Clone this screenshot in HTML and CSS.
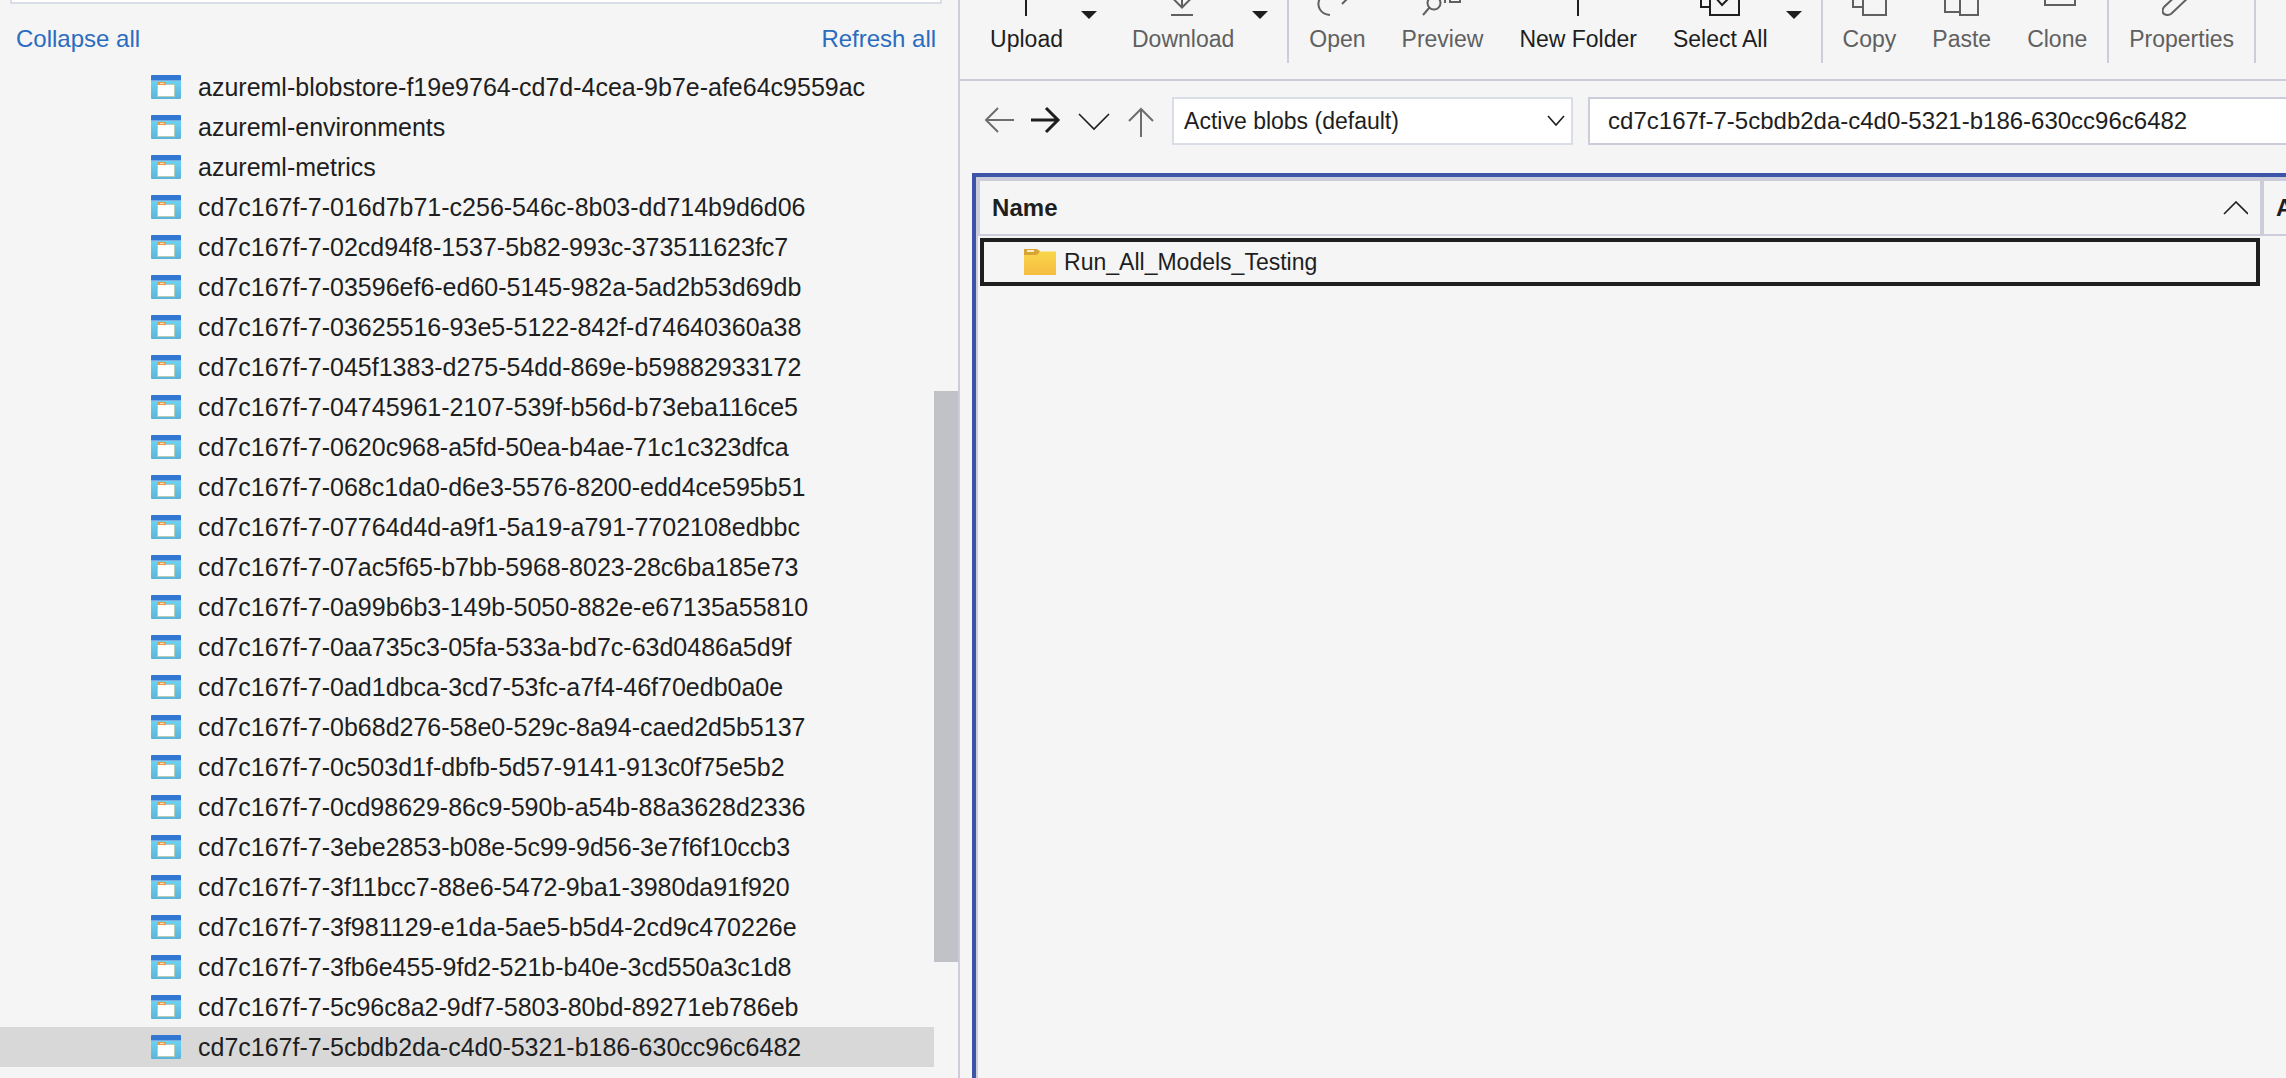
FILE: index.html
```
<!DOCTYPE html>
<html lang="en">
<head>
  <meta charset="UTF-8">
  <meta name="viewport" content="width=device-width, initial-scale=1.0">
  <title>Storage Explorer</title>
  <link rel="stylesheet" href="styles.css">
</head>
<body>
  <!-- Shared icons -->
  <svg class="sprite" aria-hidden="true">
    <defs>
      <linearGradient id="containerFill" x1="0" y1="0" x2="0" y2="1">
        <stop offset="0" stop-color="#6ed6f4"/>
        <stop offset="1" stop-color="#5cb4d8"/>
      </linearGradient>
      <linearGradient id="folderFill" x1="0" y1="0" x2="0" y2="1">
        <stop offset="0" stop-color="#f9d84a"/>
        <stop offset="1" stop-color="#f5bd41"/>
      </linearGradient>
    </defs>
    <symbol id="container" viewBox="0 0 30 24">
      <rect y="4" width="30" height="20" rx="1" fill="url(#containerFill)"/>
      <path d="M1 0h28a1 1 0 0 1 1 1v4H0V1a1 1 0 0 1 1-1z" fill="#3277d1"/>
      <rect y="5" width="30" height="1" fill="#7da9dc"/>
      <path d="M6 8h9v1h8.500q.5 0 .5.500V22H6.500q-.5 0-.5-.5z" fill="#b5cdb9"/>
      <path d="M7 10h16v11H7z" fill="#fff"/>
      <path d="M7 7h7q1 0 1 1v1l-1 1H7q-1 0-1-1V8q0-1 1-1z" fill="#ea9a48"/>
      <rect x="9" y="8" width="4" height="1" fill="#fbe3c8"/>
    </symbol>
    <symbol id="caret" viewBox="0 0 16 8">
      <path d="M0 0h16L8 8z" fill="currentColor"/>
    </symbol>
  </svg>

  <div class="app">
    <!-- Sidebar -->
    <aside class="sidebar">
      <div class="search-edge"></div>
      <div class="tree-actions">
        <a href="#">Collapse all</a>
        <a href="#">Refresh all</a>
      </div>
      <div class="tree-wrap">
        <ul class="tree">
          <li class="node"><svg class="node-icon"><use href="#container"/></svg>azureml-blobstore-f19e9764-cd7d-4cea-9b7e-afe64c9559ac</li>
          <li class="node"><svg class="node-icon"><use href="#container"/></svg>azureml-environments</li>
          <li class="node"><svg class="node-icon"><use href="#container"/></svg>azureml-metrics</li>
          <li class="node"><svg class="node-icon"><use href="#container"/></svg>cd7c167f-7-016d7b71-c256-546c-8b03-dd714b9d6d06</li>
          <li class="node"><svg class="node-icon"><use href="#container"/></svg>cd7c167f-7-02cd94f8-1537-5b82-993c-373511623fc7</li>
          <li class="node"><svg class="node-icon"><use href="#container"/></svg>cd7c167f-7-03596ef6-ed60-5145-982a-5ad2b53d69db</li>
          <li class="node"><svg class="node-icon"><use href="#container"/></svg>cd7c167f-7-03625516-93e5-5122-842f-d74640360a38</li>
          <li class="node"><svg class="node-icon"><use href="#container"/></svg>cd7c167f-7-045f1383-d275-54dd-869e-b59882933172</li>
          <li class="node"><svg class="node-icon"><use href="#container"/></svg>cd7c167f-7-04745961-2107-539f-b56d-b73eba116ce5</li>
          <li class="node"><svg class="node-icon"><use href="#container"/></svg>cd7c167f-7-0620c968-a5fd-50ea-b4ae-71c1c323dfca</li>
          <li class="node"><svg class="node-icon"><use href="#container"/></svg>cd7c167f-7-068c1da0-d6e3-5576-8200-edd4ce595b51</li>
          <li class="node"><svg class="node-icon"><use href="#container"/></svg>cd7c167f-7-07764d4d-a9f1-5a19-a791-7702108edbbc</li>
          <li class="node"><svg class="node-icon"><use href="#container"/></svg>cd7c167f-7-07ac5f65-b7bb-5968-8023-28c6ba185e73</li>
          <li class="node"><svg class="node-icon"><use href="#container"/></svg>cd7c167f-7-0a99b6b3-149b-5050-882e-e67135a55810</li>
          <li class="node"><svg class="node-icon"><use href="#container"/></svg>cd7c167f-7-0aa735c3-05fa-533a-bd7c-63d0486a5d9f</li>
          <li class="node"><svg class="node-icon"><use href="#container"/></svg>cd7c167f-7-0ad1dbca-3cd7-53fc-a7f4-46f70edb0a0e</li>
          <li class="node"><svg class="node-icon"><use href="#container"/></svg>cd7c167f-7-0b68d276-58e0-529c-8a94-caed2d5b5137</li>
          <li class="node"><svg class="node-icon"><use href="#container"/></svg>cd7c167f-7-0c503d1f-dbfb-5d57-9141-913c0f75e5b2</li>
          <li class="node"><svg class="node-icon"><use href="#container"/></svg>cd7c167f-7-0cd98629-86c9-590b-a54b-88a3628d2336</li>
          <li class="node"><svg class="node-icon"><use href="#container"/></svg>cd7c167f-7-3ebe2853-b08e-5c99-9d56-3e7f6f10ccb3</li>
          <li class="node"><svg class="node-icon"><use href="#container"/></svg>cd7c167f-7-3f11bcc7-88e6-5472-9ba1-3980da91f920</li>
          <li class="node"><svg class="node-icon"><use href="#container"/></svg>cd7c167f-7-3f981129-e1da-5ae5-b5d4-2cd9c470226e</li>
          <li class="node"><svg class="node-icon"><use href="#container"/></svg>cd7c167f-7-3fb6e455-9fd2-521b-b40e-3cd550a3c1d8</li>
          <li class="node"><svg class="node-icon"><use href="#container"/></svg>cd7c167f-7-5c96c8a2-9df7-5803-80bd-89271eb786eb</li>
          <li class="node selected"><svg class="node-icon"><use href="#container"/></svg>cd7c167f-7-5cbdb2da-c4d0-5321-b186-630cc96c6482</li>
        </ul>
        <div class="scrollbar"><div class="thumb"></div></div>
      </div>
    </aside>
    <!-- End Sidebar -->

    <main class="editor">
      <!-- Toolbar -->
      <div class="toolbar">
        <div class="group">
          <button class="tool" type="button">
            <svg class="tool-icon" viewBox="0 0 40 16"><path d="M19 0v16"/></svg>
            Upload
          </button>
          <button class="more" type="button" aria-label="Upload options"><svg class="caret"><use href="#caret"/></svg></button>
          <button class="tool" type="button" disabled>
            <svg class="tool-icon" viewBox="0 0 40 16"><path d="M19 0v7M9.500-2L19 7.500 28.500-2M8 15h22"/></svg>
            Download
          </button>
          <button class="more" type="button" aria-label="Download options"><svg class="caret"><use href="#caret"/></svg></button>
        </div>
        <div class="group">
          <button class="tool" type="button" disabled>
            <svg class="tool-icon" viewBox="0 0 40 16"><path d="M3-2C-1 6 3 14 13 15M25 4l8-8"/></svg>
            Open
          </button>
          <button class="tool" type="button" disabled>
            <svg class="tool-icon" viewBox="0 0 40 16"><circle cx="12" cy="3" r="6.500"/><path d="M7.500 7.500L1 15M23 3V-1M28-1v3h10v-3"/></svg>
            Preview
          </button>
          <button class="tool" type="button">
            <svg class="tool-icon" viewBox="0 0 40 16"><path d="M20 0v16"/></svg>
            New Folder
          </button>
          <button class="tool" type="button">
            <svg class="tool-icon" viewBox="0 0 40 16"><path d="M1-2V7h8M10-2V15h29V-2M15-3l7 8 8-8"/></svg>
            Select All
          </button>
          <button class="more" type="button" aria-label="Selection options"><svg class="caret"><use href="#caret"/></svg></button>
        </div>
        <div class="group">
          <button class="tool" type="button" disabled>
            <svg class="tool-icon" viewBox="0 0 40 16"><path d="M4-2V7h9M14-2V15h23V-2"/></svg>
            Copy
          </button>
          <button class="tool" type="button" disabled>
            <svg class="tool-icon" viewBox="0 0 40 16"><path d="M3-2V12h14M18-2V15h18V-2"/></svg>
            Paste
          </button>
          <button class="tool" type="button" disabled>
            <svg class="tool-icon" viewBox="0 0 40 16"><path d="M8-2V5h30V-2"/></svg>
            Clone
          </button>
        </div>
        <div class="group">
          <button class="tool" type="button" disabled>
            <svg class="tool-icon" viewBox="0 0 40 16"><path d="M18-8L2 7q-3 4 0 7 4 2 7 0L30-6"/></svg>
            Properties
          </button>
        </div>
      </div>
      <!-- End Toolbar -->

      <!-- Navigation -->
      <div class="navbar">
        <button class="nav-btn" type="button" aria-label="Back" disabled><svg viewBox="0 0 32 32"><path d="M30 15H2M14 3L2 15l12 12"/></svg></button>
        <button class="nav-btn" type="button" aria-label="Forward"><svg viewBox="0 0 32 32"><path class="bold" d="M0 15h28M15 3l12 12-12 12"/></svg></button>
        <button class="nav-btn" type="button" aria-label="History"><svg viewBox="0 0 32 32"><path class="thin" d="M1 9l15 15L31 9"/></svg></button>
        <button class="nav-btn" type="button" aria-label="Up" disabled><svg viewBox="0 0 32 32"><path d="M16 32V4M4 16L16 4l12 12"/></svg></button>
        <div class="select-wrap">
          <select class="filter" aria-label="Blob filter">
            <option>Active blobs (default)</option>
          </select>
          <svg class="select-arrow" viewBox="0 0 18 12"><path class="thin" d="M1 1l8 9 8-9"/></svg>
        </div>
        <input class="path" type="text" aria-label="Path" value="cd7c167f-7-5cbdb2da-c4d0-5321-b186-630cc96c6482">
      </div>
      <!-- End Navigation -->

      <div class="grid">
        <table>
          <colgroup><col class="col-name"><col class="col-tier"></colgroup>
          <thead>
            <tr>
              <th class="first"><div class="head">Name <svg class="sort" viewBox="0 0 26 14"><path class="thin" d="M2 13L14 1l12 12"/></svg></div></th>
              <th><div class="head">A</div></th>
            </tr>
          </thead>
          <tbody>
            <tr>
              <td>
                <div class="entry">
                  <svg class="folder" viewBox="0 0 32 26">
                    <path d="M0 0h12l4 2.500h16V26H0z" fill="url(#folderFill)"/>
                    <path d="M0 0h13l3 2.500L13 6H0z" fill="#d9a437"/>
                    <rect x="3" y="1" width="7" height="2" fill="#f9ecc5"/>
                  </svg>
                  Run_All_Models_Testing
                </div>
              </td>
              <td></td>
            </tr>
          </tbody>
        </table>
      </div>
    </main>
  </div>
</body>
</html>
```
FILE: styles.css
```
* {
  box-sizing: border-box;
}
body {
  margin: 0;
  font-family: "Helvetica Neue", "Liberation Sans", Arial, sans-serif;
  font-size: 24px;
  line-height: 28px;
  background-color: #f5f5f5;
  color: #1e1e1e;
  overflow: hidden;
}
button, input, select {
  font: inherit;
  color: inherit;
}
svg {
  display: block;
  flex: none;
  fill: none;
  stroke: none;
}
.sprite {
  position: absolute;
  width: 0;
  height: 0;
}
.app {
  display: flex;
  height: 100vh;
}

/* Sidebar */
.sidebar {
  display: flex;
  flex-direction: column;
  width: 42%;
  flex: none;
  border-right: 2px solid #cccddb;
}
.search-edge {
  height: 4px;
  margin: 0 16px 0 10px;
  background-color: #fff;
  border: 2px solid #d9dde5;
  border-top: none;
}
.tree-actions {
  display: flex;
  justify-content: space-between;
  height: 63px;
  padding: 21px 22px 0 16px;
}
.tree-actions a {
  color: #2b6cbf;
  text-decoration: none;
}
.tree-wrap {
  display: flex;
  flex: 1;
  min-height: 0;
}
.tree {
  flex: 1;
  margin: 0;
  padding: 0;
  list-style: none;
}
.node {
  display: flex;
  align-items: center;
  height: 40px;
  padding-left: 151px;
  font-size: 25px;
  line-height: 26px;
  white-space: nowrap;
}
.node.selected {
  background-color: #d8d8d8;
}
.node-icon {
  width: 30px;
  height: 24px;
  margin-right: 17px;
}
.scrollbar {
  display: flex;
  flex-direction: column;
  width: 24px;
}
.scrollbar::before {
  content: "";
  flex: 64;
}
.scrollbar::after {
  content: "";
  flex: 23;
}
.thumb {
  flex: 113;
  background-color: #c1c2c8;
}

/* Toolbar */
.editor {
  flex: 1;
  min-width: 0;
  overflow: hidden;
}
.toolbar {
  display: flex;
  height: 81px;
  padding-left: 10px;
  font-size: 23px;
  border-bottom: 2px solid #cccddb;
}
.group {
  display: flex;
  height: 63px;
  padding: 0 2px;
  border-right: 2px solid #cccddb;
}
.tool {
  display: flex;
  flex-direction: column;
  align-items: center;
  gap: 9px;
  padding: 0 18px;
  background: none;
  border: none;
  white-space: nowrap;
}
.tool:disabled {
  color: #606060;
}
.tool-icon {
  width: 40px;
  height: 16px;
  stroke: currentColor;
  stroke-width: 2;
}
.more {
  display: flex;
  padding: 11px 17px 0 0;
  background: none;
  border: none;
}
.caret {
  width: 16px;
  height: 8px;
  color: #1e1e1e;
}

/* Navigation */
.navbar {
  display: flex;
  align-items: center;
  height: 92px;
  padding: 0 0 12px 24px;
}
.nav-btn {
  flex: none;
  width: 32px;
  height: 32px;
  margin-right: 15px;
  padding: 0;
  background: none;
  border: none;
}
.nav-btn:disabled {
  color: #6e6e6e;
}
.nav-btn svg, .select-arrow, .sort {
  stroke: currentColor;
  stroke-width: 2;
}
.nav-btn .bold {
  stroke-width: 3;
}
.thin {
  stroke-width: 1.6;
}
.select-wrap {
  position: relative;
  flex: none;
  width: 401px;
  margin-right: 15px;
}
.filter {
  display: block;
  width: 100%;
  height: 48px;
  padding: 0 40px 0 10px;
  font-size: 23px;
  appearance: none;
  background-color: #fff;
  border: 2px solid #d9dde5;
  border-radius: 0;
}
.select-arrow {
  position: absolute;
  top: 18px;
  right: 8px;
  width: 18px;
  height: 12px;
  pointer-events: none;
}
.path {
  flex: 1;
  min-width: 0;
  height: 48px;
  margin-right: -20px;
  padding: 0 18px;
  background-color: #fff;
  border: 2px solid #cccddb;
}

/* Blob list */
.grid {
  height: 100%;
  margin-left: 12px;
  border-top: 4px solid #3c55a8;
  border-left: 4px solid #3c55a8;
  overflow: hidden;
}
table {
  width: 1500px;
  height: 100%;
  table-layout: fixed;
  border-spacing: 0;
  border-left: 2px solid #cccddb;
}
.col-name {
  width: 1286px;
}
th {
  height: 59px;
  padding: 0 12px;
  text-align: left;
  border-top: 4px solid #cccddb;
  border-right: 4px solid #cccddb;
  border-bottom: 2px solid #cccddb;
}
th.first {
  border-left: 2px solid #cccddb;
}
.head {
  display: flex;
  align-items: center;
  justify-content: space-between;
}
.sort {
  width: 26px;
  height: 14px;
}
td {
  padding: 2px 4px 0 2px;
  vertical-align: top;
}
.entry {
  display: flex;
  align-items: center;
  gap: 8px;
  height: 48px;
  padding: 0 40px;
  font-size: 23px;
  border: 4px solid #1e1e1e;
}
.folder {
  width: 32px;
  height: 26px;
}
```
